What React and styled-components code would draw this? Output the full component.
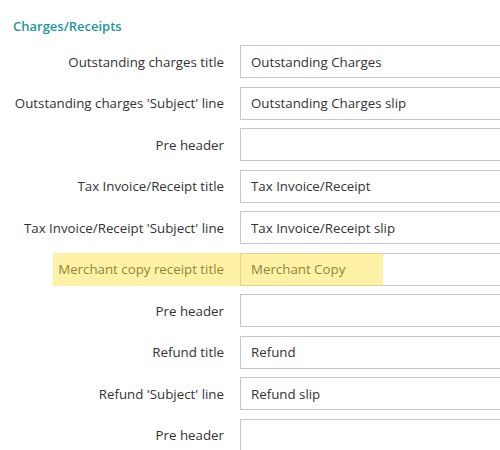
import styled, { createGlobalStyle } from "styled-components";

const GlobalStyle = createGlobalStyle`
  body {
    margin: 0;
    background: #fff;
    overflow: hidden;
    font-family: "Open Sans", "Noto Sans", sans-serif;
  }
`;

const Panel = styled.section`
  width: 500px;
  height: 450px;
  padding: 17px 0 0 13px;
  box-sizing: border-box;
  overflow: hidden;
`;

const Heading = styled.h3`
  margin: 0 0 10px;
  font-size: 13px;
  line-height: 18px;
  font-weight: 600;
  color: #1e969c;
`;

const Form = styled.div`
  display: flex;
  flex-direction: column;
  gap: 8.5px;
`;

const Row = styled.div`
  position: relative;
  display: grid;
  grid-template-columns: 211px 300px;
  column-gap: 16px;
  align-items: center;
  height: 33px;
`;

const Label = styled.label`
  text-align: right;
  font-size: 13.3px;
  color: #333;
  white-space: nowrap;
`;

const Input = styled.input`
  box-sizing: border-box;
  height: 33px;
  width: 300px;
  padding: 0 10px;
  border: 1px solid #c8c8c8;
  border-radius: 0;
  font-family: inherit;
  font-size: 13.3px;
  color: #333;
  background: #fff;
  outline: none;
`;

const Highlight = styled.div`
  position: absolute;
  top: 0;
  bottom: 0;
  left: 40px;
  width: 330px;
  background: rgba(255, 226, 60, 0.45);
  pointer-events: none;
`;

const fields = [
  { label: "Outstanding charges title", value: "Outstanding Charges" },
  { label: "Outstanding charges 'Subject' line", value: "Outstanding Charges slip" },
  { label: "Pre header", value: "" },
  { label: "Tax Invoice/Receipt title", value: "Tax Invoice/Receipt" },
  { label: "Tax Invoice/Receipt 'Subject' line", value: "Tax Invoice/Receipt slip" },
  { label: "Merchant copy receipt title", value: "Merchant Copy", marked: true },
  { label: "Pre header", value: "" },
  { label: "Refund title", value: "Refund" },
  { label: "Refund 'Subject' line", value: "Refund slip" },
  { label: "Pre header", value: "" },
];

export default function App() {
  return (
    <>
      <GlobalStyle />
      <Panel>
        <Heading>Charges/Receipts</Heading>
        <Form>
          {fields.map((f, i) => (
            <Row key={i}>
              <Label>{f.label}</Label>
              <Input defaultValue={f.value} />
              {f.marked && <Highlight />}
            </Row>
          ))}
        </Form>
      </Panel>
    </>
  );
}
